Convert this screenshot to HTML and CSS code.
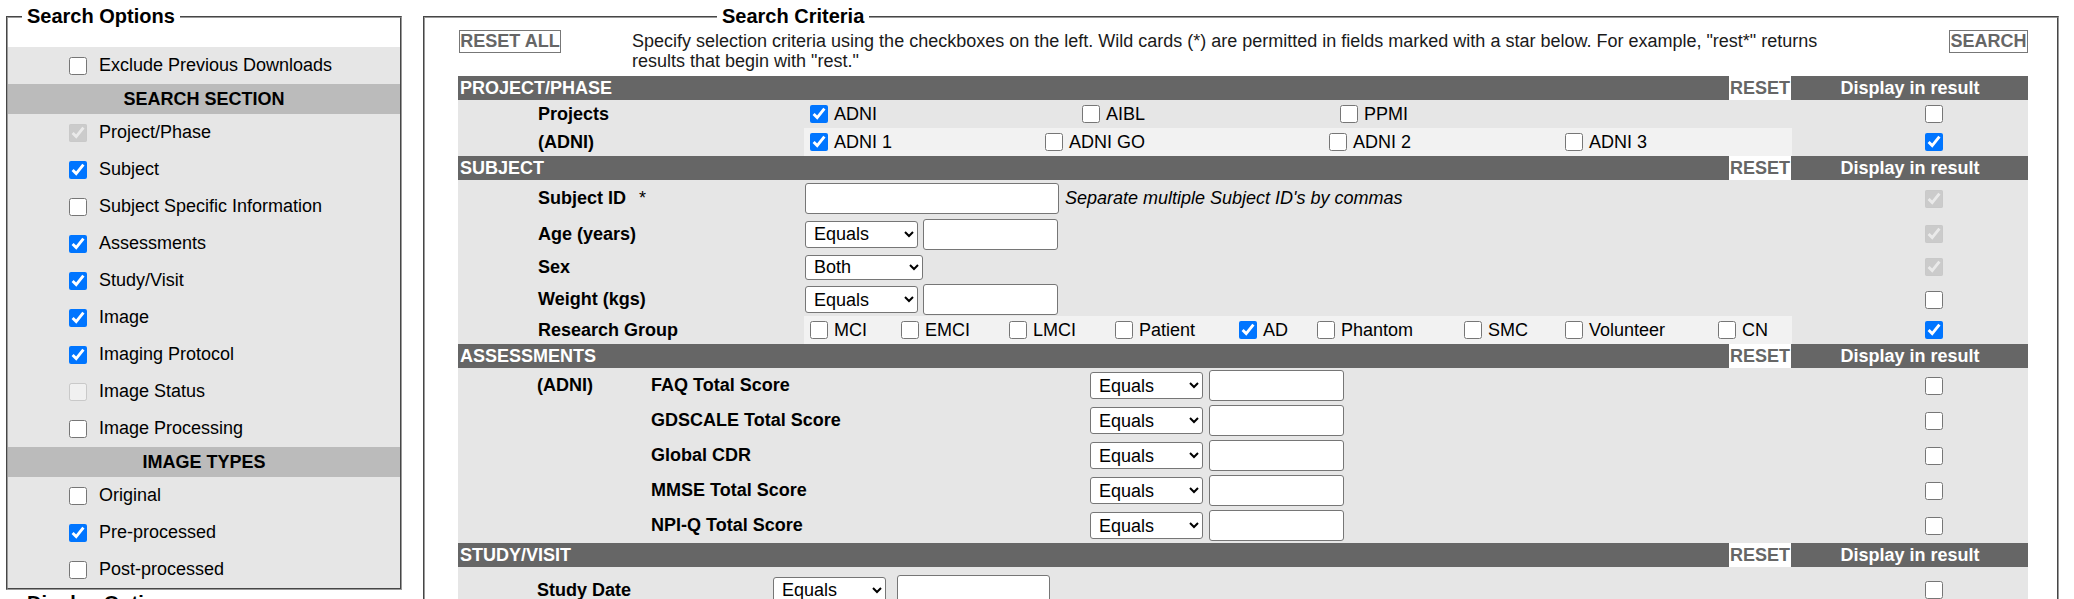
FILE: index.html
```html
<!DOCTYPE html>
<html lang="en">
<head>
<meta charset="utf-8">
<title>Advanced Search</title>
<link rel="stylesheet" href="styles.css">
</head>
<body>
<div class="page">
  <div class="side">
    <fieldset class="box box-left">
      <legend>Search Options</legend>
      <div class="opts">
        <label class="opt"><input type="checkbox"><span>Exclude Previous Downloads</span></label>
        <div class="opt-head">SEARCH SECTION</div>
        <label class="opt"><input type="checkbox" checked disabled><span>Project/Phase</span></label>
        <label class="opt"><input type="checkbox" checked><span>Subject</span></label>
        <label class="opt"><input type="checkbox"><span>Subject Specific Information</span></label>
        <label class="opt"><input type="checkbox" checked><span>Assessments</span></label>
        <label class="opt"><input type="checkbox" checked><span>Study/Visit</span></label>
        <label class="opt"><input type="checkbox" checked><span>Image</span></label>
        <label class="opt"><input type="checkbox" checked><span>Imaging Protocol</span></label>
        <label class="opt"><input type="checkbox" disabled><span>Image Status</span></label>
        <label class="opt"><input type="checkbox"><span>Image Processing</span></label>
        <div class="opt-head">IMAGE TYPES</div>
        <label class="opt"><input type="checkbox"><span>Original</span></label>
        <label class="opt"><input type="checkbox" checked><span>Pre-processed</span></label>
        <label class="opt"><input type="checkbox"><span>Post-processed</span></label>
      </div>
    </fieldset>
    <fieldset class="box box-display">
      <legend>Display Options</legend>
      <div class="opts-stub"></div>
    </fieldset>
  </div>

  <fieldset class="box box-right">
    <legend>Search Criteria</legend>
    <div class="topbar">
      <button class="btn btn-reset-all" type="button">RESET ALL</button>
      <p class="intro">Specify selection criteria using the checkboxes on the left. Wild cards (*) are permitted in fields marked with a star below. For example, "rest*" returns results that begin with "rest."</p>
      <button class="btn btn-search" type="button">SEARCH</button>
    </div>

    <div class="crit">
      <!-- PROJECT/PHASE -->
      <div class="sec-head">
        <div class="sec-title"><span>PROJECT/PHASE</span><button class="reset" type="button">RESET</button></div>
        <div class="sec-disp">Display in result</div>
      </div>
      <div class="row h28">
        <div class="main">
          <div class="lbl">Projects</div>
          <div class="vals cols-proj">
            <label class="chk"><input type="checkbox" checked>ADNI</label>
            <label class="chk"><input type="checkbox">AIBL</label>
            <label class="chk"><input type="checkbox">PPMI</label>
          </div>
        </div>
        <div class="disp"><input type="checkbox"></div>
      </div>
      <div class="row h28">
        <div class="main">
          <div class="lbl">(ADNI)</div>
          <div class="vals light cols-adni">
            <label class="chk"><input type="checkbox" checked>ADNI 1</label>
            <label class="chk"><input type="checkbox">ADNI GO</label>
            <label class="chk"><input type="checkbox">ADNI 2</label>
            <label class="chk"><input type="checkbox">ADNI 3</label>
          </div>
        </div>
        <div class="disp"><input type="checkbox" checked></div>
      </div>

      <!-- SUBJECT -->
      <div class="sec-head">
        <div class="sec-title"><span>SUBJECT</span><button class="reset" type="button">RESET</button></div>
        <div class="sec-disp">Display in result</div>
      </div>
      <div class="row h37">
        <div class="main">
          <div class="lbl">Subject ID<span class="star">*</span></div>
          <div class="field">
            <input class="txt txt-id" type="text">
            <span class="note">Separate multiple Subject ID's by commas</span>
          </div>
        </div>
        <div class="disp"><input type="checkbox" checked disabled></div>
      </div>
      <div class="row h34">
        <div class="main">
          <div class="lbl">Age (years)</div>
          <div class="field">
            <select class="sel"><option>Equals</option></select>
            <input class="txt" type="text">
          </div>
        </div>
        <div class="disp"><input type="checkbox" checked disabled></div>
      </div>
      <div class="row h32">
        <div class="main">
          <div class="lbl">Sex</div>
          <div class="field">
            <select class="sel sel-sex"><option>Both</option></select>
          </div>
        </div>
        <div class="disp"><input type="checkbox" checked disabled></div>
      </div>
      <div class="row h33">
        <div class="main">
          <div class="lbl">Weight (kgs)</div>
          <div class="field">
            <select class="sel"><option>Equals</option></select>
            <input class="txt" type="text">
          </div>
        </div>
        <div class="disp"><input type="checkbox"></div>
      </div>
      <div class="row h28">
        <div class="main">
          <div class="lbl">Research Group</div>
          <div class="vals light cols-group">
            <label class="chk"><input type="checkbox">MCI</label>
            <label class="chk"><input type="checkbox">EMCI</label>
            <label class="chk"><input type="checkbox">LMCI</label>
            <label class="chk"><input type="checkbox">Patient</label>
            <label class="chk"><input type="checkbox" checked>AD</label>
            <label class="chk"><input type="checkbox">Phantom</label>
            <label class="chk"><input type="checkbox">SMC</label>
            <label class="chk"><input type="checkbox">Volunteer</label>
            <label class="chk"><input type="checkbox">CN</label>
          </div>
        </div>
        <div class="disp"><input type="checkbox" checked></div>
      </div>

      <!-- ASSESSMENTS -->
      <div class="sec-head">
        <div class="sec-title"><span>ASSESSMENTS</span><button class="reset" type="button">RESET</button></div>
        <div class="sec-disp">Display in result</div>
      </div>
      <div class="row h35">
        <div class="main assess">
          <div class="a-proj">(ADNI)</div>
          <div class="a-lbl">FAQ Total Score</div>
          <div class="field"><select class="sel"><option>Equals</option></select><input class="txt" type="text"></div>
        </div>
        <div class="disp"><input type="checkbox"></div>
      </div>
      <div class="row h35">
        <div class="main assess">
          <div class="a-proj"></div>
          <div class="a-lbl">GDSCALE Total Score</div>
          <div class="field"><select class="sel"><option>Equals</option></select><input class="txt" type="text"></div>
        </div>
        <div class="disp"><input type="checkbox"></div>
      </div>
      <div class="row h35">
        <div class="main assess">
          <div class="a-proj"></div>
          <div class="a-lbl">Global CDR</div>
          <div class="field"><select class="sel"><option>Equals</option></select><input class="txt" type="text"></div>
        </div>
        <div class="disp"><input type="checkbox"></div>
      </div>
      <div class="row h35">
        <div class="main assess">
          <div class="a-proj"></div>
          <div class="a-lbl">MMSE Total Score</div>
          <div class="field"><select class="sel"><option>Equals</option></select><input class="txt" type="text"></div>
        </div>
        <div class="disp"><input type="checkbox"></div>
      </div>
      <div class="row h35">
        <div class="main assess">
          <div class="a-proj"></div>
          <div class="a-lbl">NPI-Q Total Score</div>
          <div class="field"><select class="sel"><option>Equals</option></select><input class="txt" type="text"></div>
        </div>
        <div class="disp"><input type="checkbox"></div>
      </div>

      <!-- STUDY/VISIT -->
      <div class="sec-head">
        <div class="sec-title"><span>STUDY/VISIT</span><button class="reset" type="button">RESET</button></div>
        <div class="sec-disp">Display in result</div>
      </div>
      <div class="row h46">
        <div class="main study">
          <div class="s-lbl">Study Date</div>
          <div class="field field-wide"><select class="sel"><option>Equals</option></select><input class="txt txt-date" type="text"></div>
        </div>
        <div class="disp"><input type="checkbox"></div>
      </div>
    </div>
  </fieldset>
</div>
</body>
</html>
```

FILE: styles.css
```css
* { box-sizing: border-box; }

html { overflow: hidden; }

body {
  margin: 0;
  font-family: "Liberation Sans", Arial, sans-serif;
  font-size: 18px;
  color: #000;
  background: #fff;
}

.page {
  display: flex;
  align-items: flex-start;
  padding-top: 5px;
}

/* ---------- fieldsets ---------- */
.box {
  border: 2px groove #9a9a9a;
  margin: 0;
  padding: 0;
  min-width: 0;
}

.box legend {
  font-size: 20px;
  font-weight: bold;
  line-height: 23px;
  padding: 0 5px;
  margin-left: 14px;
}

.side {
  display: flex;
  flex-direction: column;
  flex: none;
  width: 396px;
  margin-left: 6px;
}

.box-display { margin-top: 2px; }
.opts-stub { height: 40px; }

/* ---------- left options ---------- */
.opts {
  margin-top: 19px;
  background: #e6e6e6;
}

.opt {
  display: flex;
  align-items: center;
  height: 37px;
  padding-left: 61px;
}

.opt input {
  width: 18px;
  height: 18px;
  margin: 0 12px 0 0;
}

.opt-head {
  height: 30px;
  background: #bbbbbb;
  font-weight: bold;
  display: flex;
  align-items: center;
  justify-content: center;
}

/* ---------- right criteria ---------- */
.box-right {
  flex: none;
  width: 1636px;
  margin-left: 21px;
  padding: 0 29px 0 33px;
}

.box-right legend { margin-left: 259px; }

.topbar {
  display: flex;
  align-items: flex-start;
  height: 48px;
  padding-top: 2px;
}

.btn {
  font: bold 18px "Liberation Sans", Arial, sans-serif;
  color: #666;
  background: #fff;
  border: 1px solid #777;
  padding: 0;
  height: 23px;
  line-height: 21px;
  flex: none;
}

.btn-reset-all { width: 102px; margin-left: 1px; }
.btn-search { width: 79px; margin-left: auto; }

.intro {
  margin: 1px 0 0 71px;
  width: 1220px;
  line-height: 20px;
  color: #1a1a1a;
}

.crit { width: 1570px; }

.sec-head {
  display: grid;
  grid-template-columns: 1334px 236px;
  height: 24px;
  background: #666;
  color: #fff;
  font-weight: bold;
}

.sec-title {
  display: flex;
  align-items: center;
  justify-content: space-between;
  padding-left: 2px;
}

.reset {
  height: 24px;
  width: 62px;
  margin-right: 1px;
  padding: 0;
  border: 0;
  background: #fff;
  color: #666;
  font: bold 18px "Liberation Sans", Arial, sans-serif;
}

.sec-disp {
  text-align: center;
  line-height: 24px;
}

.row {
  display: grid;
  grid-template-columns: 1334px 236px;
  background: #e6e6e6;
}

.h28 { height: 28px; }
.h32 { height: 32px; }
.h33 { height: 33px; }
.h34 { height: 34px; }
.h35 { height: 35px; }
.h37 { height: 37px; }
.h46 { height: 46px; }

.main {
  display: flex;
  align-items: center;
}

.disp {
  display: flex;
  align-items: center;
  padding-left: 133px;
}

.disp input,
.chk input {
  width: 18px;
  height: 18px;
  margin: 0;
}

.lbl {
  flex: none;
  width: 346px;
  padding-left: 80px;
  font-weight: bold;
}

.star {
  font-weight: normal;
  margin-left: 13px;
}

.vals {
  flex: 1;
  align-self: stretch;
  display: grid;
  align-items: center;
}

.vals.light { background: #f2f2f2; }

.cols-proj { grid-template-columns: 272px 258px 1fr; }
.cols-adni { grid-template-columns: 235px 284px 236px 1fr; }
.cols-group { grid-template-columns: 91px 108px 106px 124px 78px 147px 101px 153px 1fr; }

.chk {
  display: flex;
  align-items: center;
  gap: 6px;
  padding-left: 6px;
  white-space: nowrap;
}

.field {
  display: flex;
  align-items: center;
  gap: 5px;
  padding-left: 1px;
}

.sel {
  font: 18px "Liberation Sans", Arial, sans-serif;
  color: #000;
  width: 113px;
  height: 27px;
  border: 1px solid #767676;
  border-radius: 3px;
  background: #fff;
  padding: 0 0 0 4px;
}

.sel-sex { width: 118px; height: 25px; }

.txt {
  font: 18px "Liberation Sans", Arial, sans-serif;
  width: 135px;
  height: 31px;
  border: 1px solid #767676;
  border-radius: 3px;
  background: #fff;
  padding: 0 4px;
}

.txt-id { width: 254px; }

.note { font-style: italic; margin-left: 1px; }

/* assessments */
.assess { padding-left: 79px; }
.a-proj { flex: none; width: 114px; font-weight: bold; }
.a-lbl { flex: none; width: 439px; font-weight: bold; }
.assess .field { gap: 6px; padding-left: 0; }

/* study / visit */
.study { padding-left: 79px; }
.s-lbl { flex: none; width: 236px; font-weight: bold; }
.field-wide { gap: 11px; padding-left: 0; }
.txt-date { width: 153px; }
```
